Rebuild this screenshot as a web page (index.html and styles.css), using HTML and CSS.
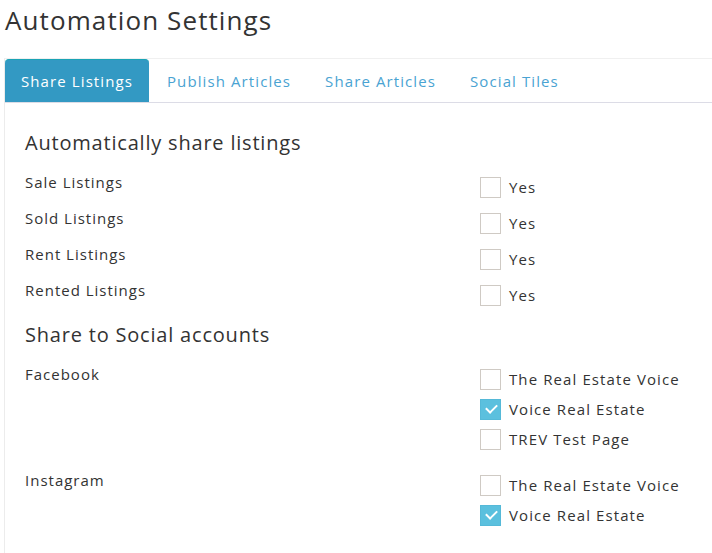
FILE: index.html
```html
<!DOCTYPE html>
<html lang="en">
<head>
  <meta charset="UTF-8">
  <title>Automation Settings</title>
  <link rel="stylesheet" href="styles.css">
</head>
<body>

<div class="page">
  <h1 class="page-title">Automation Settings</h1>

  <div class="tab-box">
    <!-- Tabs -->
    <ul class="tabs">
      <li class="tab active">Share Listings</li>
      <li class="tab">Publish Articles</li>
      <li class="tab">Share Articles</li>
      <li class="tab">Social Tiles</li>
    </ul>

    <div class="tab-content">
      <h2 class="section-title">Automatically share listings</h2>

      <div class="setting-row">
        <div class="setting-label">Sale Listings</div>
        <div class="setting-options">
          <label class="option"><span class="check"></span>Yes</label>
        </div>
      </div>
      <div class="setting-row">
        <div class="setting-label">Sold Listings</div>
        <div class="setting-options">
          <label class="option"><span class="check"></span>Yes</label>
        </div>
      </div>
      <div class="setting-row">
        <div class="setting-label">Rent Listings</div>
        <div class="setting-options">
          <label class="option"><span class="check"></span>Yes</label>
        </div>
      </div>
      <div class="setting-row">
        <div class="setting-label">Rented Listings</div>
        <div class="setting-options">
          <label class="option"><span class="check"></span>Yes</label>
        </div>
      </div>

      <h2 class="section-title second">Share to Social accounts</h2>

      <div class="setting-row group">
        <div class="setting-label">Facebook</div>
        <div class="setting-options">
          <label class="option"><span class="check"></span>The Real Estate Voice</label>
          <label class="option"><span class="check checked"></span>Voice Real Estate</label>
          <label class="option"><span class="check"></span>TREV Test Page</label>
        </div>
      </div>
      <div class="setting-row group">
        <div class="setting-label">Instagram</div>
        <div class="setting-options">
          <label class="option"><span class="check"></span>The Real Estate Voice</label>
          <label class="option"><span class="check checked"></span>Voice Real Estate</label>
        </div>
      </div>
    </div>
  </div>
</div>

</body>
</html>
```

FILE: styles.css
```css
* {
  box-sizing: border-box;
}
body {
  margin: 0;
  font-family: "Open Sans", sans-serif;
  color: #333;
  background-color: #fff;
}
.page {
  padding: 2px 0 0 4px;
}
.page-title {
  margin: 0 0 20px 1px;
  font-size: 26px;
  line-height: 36px;
  font-weight: normal;
  letter-spacing: 1.1px;
  color: #333;
}

/* TABS */
.tab-box {
  border-top: 1px solid #f0f0f0;
  border-left: 1px solid #ececec;
}
.tabs {
  list-style: none;
  margin: 0;
  padding: 0;
  display: flex;
  border-bottom: 1px solid #dcdce6;
}
.tab {
  height: 43px;
  padding: 0 16px;
  margin-right: 2px;
  display: flex;
  align-items: center;
  font-size: 15px;
  letter-spacing: 1.1px;
  color: #4aa3d2;
  border-top: 1px solid transparent;
  border-radius: 4px 4px 0 0;
}
.tab.active {
  background-color: #3399c3;
  border-top-color: #1aa3b5;
  color: #fff;
}

/* NỘI DUNG */
.tab-content {
  padding: 28px 20px 20px 20px;
}
.section-title {
  margin: 0 0 17px 0;
  font-size: 20px;
  line-height: 24px;
  font-weight: normal;
  letter-spacing: 0.8px;
  color: #333;
}
.section-title.second {
  margin-top: 13px;
}
.setting-row {
  display: grid;
  grid-template-columns: 455px 1fr;
  margin-bottom: 6px;
}
.setting-row.group {
  margin-bottom: 16px;
}
.setting-label {
  font-size: 15px;
  line-height: 20px;
  letter-spacing: 1px;
  color: #333;
}
.option {
  display: flex;
  align-items: center;
  height: 30px;
  font-size: 15px;
  letter-spacing: 1.1px;
  color: #333;
}
.check {
  width: 21px;
  height: 21px;
  margin-right: 8px;
  border: 1px solid #cfcac4;
  background-color: #fff;
  position: relative;
}
.check.checked {
  background-color: #5bc0de;
  border-color: #55b9d8;
}
.check.checked::after {
  content: "";
  position: absolute;
  left: 5px;
  top: 4px;
  width: 9px;
  height: 5px;
  border-left: 2px solid #fff;
  border-bottom: 2px solid #fff;
  transform: rotate(-45deg);
}
```
